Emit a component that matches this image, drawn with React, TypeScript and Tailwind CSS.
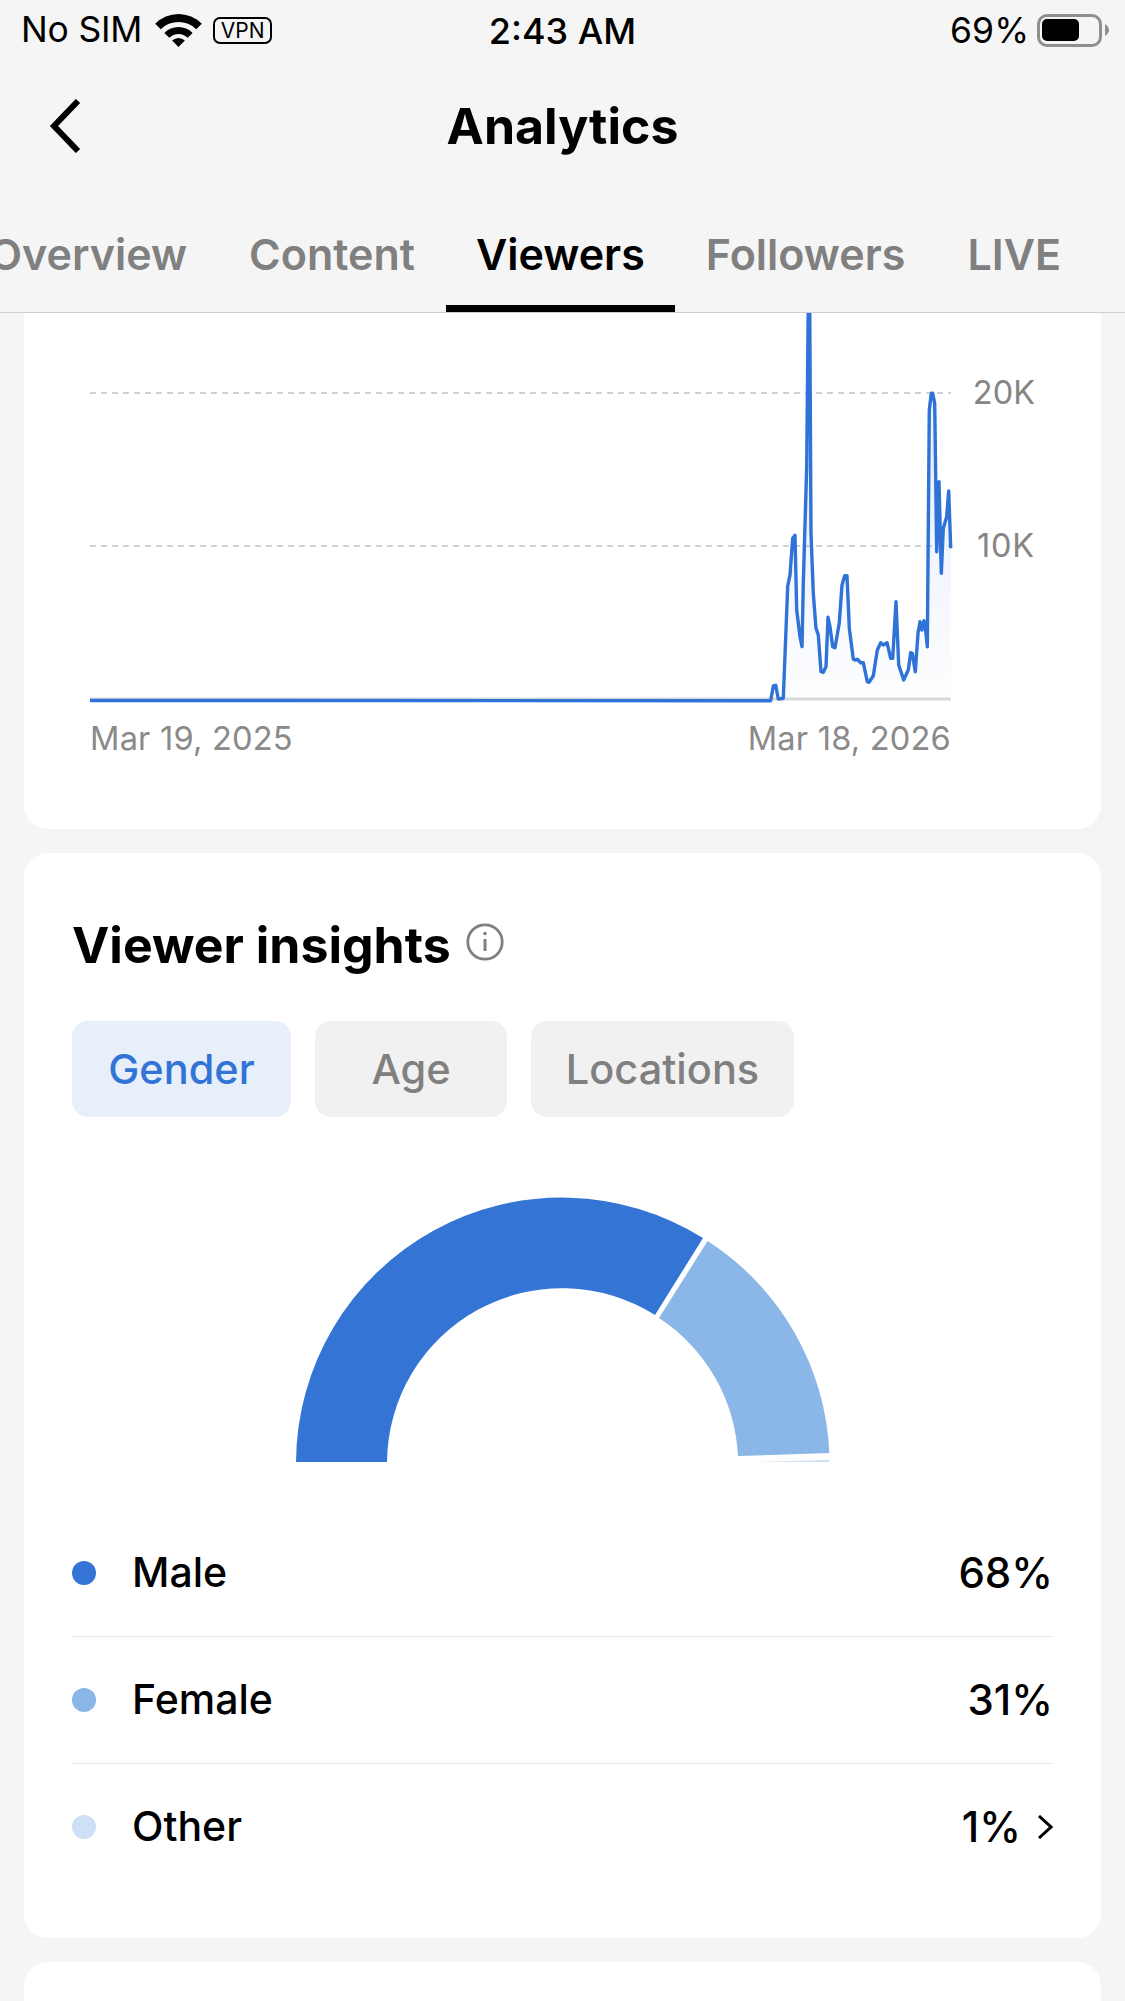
const POINTS = [
  [0,1202],[92,1202],[100,1158],[107,1156],[115,1197],[130,1195],[143,858],[150,825],[158,715],[165,706],
  [170,930],[180,1010],[186,1040],[190,850],[200,500],[205,0],[209,0],[213,700],[220,880],[228,985],
  [235,1005],[243,1115],[250,1117],[258,1100],[264,952],[270,980],[278,1040],[285,1043],[298,968],[306,855],
  [314,827],[321,827],[328,985],[340,1078],[345,1080],[352,1078],[362,1088],[370,1088],[382,1145],[387,1147],
  [400,1127],[412,1050],[422,1028],[430,1035],[441,1028],[452,1075],[458,1075],[468,905],[476,1095],[491,1140],
  [505,1110],[512,1058],[517,1060],[526,1115],[534,1000],[540,965],[546,990],[552,962],[558,1000],[562,1040],
  [568,330],[574,280],[578,280],[584,310],[590,755],[597,545],[604,820],[610,685],[620,650],[626,573],[632,745],
]

// crop coords -> page coords
const pts = POINTS.map(([x, y]) => [740 + x / 3, 300 + y / 3])
const line = "M 90,700.5 L " + pts.map(([x, y]) => `${x.toFixed(1)},${y.toFixed(1)}`).join(" L ")
const area = line + " L 951,699 L 90,699 Z"

const LEGEND = [
  { label: "Male", value: "68%", dot: "bg-[#3474d4]" },
  { label: "Female", value: "31%", dot: "bg-[#8bb6e8]" },
  { label: "Other", value: "1%", dot: "bg-[#cde0f6]", more: true },
]

function Wifi() {
  return (
    <svg viewBox="-1 0 47 33" width="47" height="33" fill="#000">
      <path d="M-0.8 9.7 A33 33 0 0 1 45.8 9.7 L40.2 15.3 A25 25 0 0 0 4.8 15.3 Z" />
      <path d="M8.4 18.9 A20 20 0 0 1 36.6 18.9 L31.7 23.8 A13 13 0 0 0 13.3 23.8 Z" />
      <path d="M16.1 26.6 A9 9 0 0 1 28.9 26.6 L22.5 33 Z" />
    </svg>
  )
}

function StatusBar() {
  return (
    <div className="grid h-[60px] grid-cols-[1fr_auto_1fr] items-center text-[35.5px] text-black">
      <div className="flex items-center pl-[21px]">
        <span className="tracking-[-0.2px]">No SIM</span>
        <span className="ml-[13px]"><Wifi /></span>
        <span className="ml-[11px] flex h-[27px] w-[59px] items-center justify-center rounded-[7px] border-[2.5px] border-black text-[21px] leading-none">VPN</span>
      </div>
      <span className="pt-[2px] text-[36px] font-medium">2:43 AM</span>
      <div className="flex items-center justify-end pr-[16px]">
        <span className="pt-[2px]">69%</span>
        <span className="ml-[8px] flex h-[33px] w-[65px] items-center rounded-[10px] border-[3px] border-[#8f8f8f] pl-[2px]">
          <span className="h-[22px] w-[37px] rounded-[5px] bg-black" />
        </span>
        <svg viewBox="0 0 4 12" width="4" height="12" className="ml-[3px]">
          <path d="M0 0 C3 2 4 4 4 6 C4 8 3 10 0 12 Z" fill="#8f8f8f" />
        </svg>
      </div>
    </div>
  )
}

function Tabs() {
  const tabs = ["Overview", "Content", "Viewers", "Followers", "LIVE"]
  return (
    <div className="flex h-[121px] overflow-hidden border-b border-[#cfcfcf]">
      <div className="-ml-[42px] flex shrink-0">
        {tabs.map((t) => (
          <div
            key={t}
            className={
              t === "Viewers"
                ? "flex h-[120px] items-center border-b-[7px] border-black px-[30px] pt-[11px] text-[43px] font-semibold text-black"
                : "flex h-[120px] items-center border-b-[7px] border-transparent px-[31px] pt-[11px] text-[43px] font-semibold text-[#808080]"
            }
          >
            {t}
          </div>
        ))}
      </div>
    </div>
  )
}

function ChartCard() {
  return (
    <div className="h-[516px] rounded-b-[24px] bg-white pl-[66px]">
      <svg viewBox="90 313 960 396" width="960" height="396" className="block">
        <defs>
          <linearGradient id="fade" x1="0" y1="0" x2="0" y2="1">
            <stop offset="0.45" stopColor="#3474d4" stopOpacity="0.1" />
            <stop offset="1" stopColor="#3474d4" stopOpacity="0.01" />
          </linearGradient>
        </defs>
        <line x1="90" x2="951" y1="393" y2="393" stroke="#c2c2c2" strokeWidth="1.5" strokeDasharray="6 5" />
        <line x1="90" x2="951" y1="546" y2="546" stroke="#c2c2c2" strokeWidth="1.5" strokeDasharray="6 5" />
        <line x1="90" x2="951" y1="699" y2="699" stroke="#d8d8d8" strokeWidth="3" />
        <path d={area} fill="url(#fade)" />
        <path d={line} fill="none" stroke="#2f72d8" strokeWidth="3.4" strokeLinejoin="round" />
        <text x="1035" y="404" textAnchor="end" fontSize="32.5" fill="#858585">20K</text>
        <text x="1035" y="557" textAnchor="end" fontSize="32.5" letterSpacing="0.8" fill="#858585">10K</text>
      </svg>
      <div className="mt-[9px] flex w-[861px] justify-between text-[32.6px] leading-[40px] tracking-[0.2px] text-[#8a8a8a]">
        <span>Mar 19, 2025</span>
        <span>Mar 18, 2026</span>
      </div>
    </div>
  )
}

function Donut() {
  return (
    <svg viewBox="290 1190 545 275" width="545" height="275" className="mx-auto mt-[73px] block">
      <path d="M296 1462 A266 266 0 0 1 703 1238 L655 1315 A175 175 0 0 0 387 1462 Z" fill="#3474d4" />
      <path d="M707.6 1241 A266 266 0 0 1 829.4 1453 L738 1456 A175 175 0 0 0 659 1318 Z" fill="#8bb6e8" />
      <path d="M755 1462 L829.4 1460 L829.4 1462 Z" fill="#cde0f6" />
    </svg>
  )
}

function InsightsCard() {
  return (
    <div className="h-[1085px] rounded-[24px] bg-white px-[48px] pt-[62px]">
      <div className="flex h-[60px] items-center">
        <h2 className="text-[50px] font-bold leading-[60px] text-black">Viewer insights</h2>
        <svg viewBox="0 0 38 38" width="38" height="38" fill="none" stroke="#808080" className="ml-[15px] -mt-[6px]">
          <circle cx="19" cy="19" r="17.2" strokeWidth="2.8" />
          <line x1="19" x2="19" y1="16" y2="28" strokeWidth="3" />
          <circle cx="19" cy="10.5" r="1.2" fill="#808080" strokeWidth="1.2" />
        </svg>
      </div>
      <div className="mt-[46px] flex gap-[24px] text-[41.5px] font-medium">
        <div className="flex h-[96px] w-[219px] items-center justify-center rounded-[16px] bg-[#e7effa] text-[#3274d6]">Gender</div>
        <div className="flex h-[96px] w-[192px] items-center justify-center rounded-[16px] bg-[#f1f1f1] text-[#808080]">Age</div>
        <div className="flex h-[96px] w-[263px] items-center justify-center rounded-[16px] bg-[#f1f1f1] text-[#808080]">Locations</div>
      </div>
      <Donut />
      <div className="mt-[45px]">
        {LEGEND.map((row, i) => (
          <div
            key={row.label}
            className={
              i < 2
                ? "flex h-[127px] items-center border-b border-[#e6e6e6] text-[42px] font-medium text-black"
                : "flex h-[126px] items-center text-[42px] font-medium text-black"
            }
          >
            <span className={`h-[24px] w-[24px] rounded-full ${row.dot}`} />
            <span className="ml-[36px] flex-1 text-[41px]">{row.label}</span>
            <span className="pb-[2px]">{row.value}</span>
            {row.more && (
              <svg viewBox="0 0 16 24" width="16" height="24" fill="none" stroke="#000" strokeWidth="3" className="ml-[16px]">
                <path d="M2 1 L14 12 L2 23" />
              </svg>
            )}
          </div>
        ))}
      </div>
    </div>
  )
}

export default function App() {
  return (
    <div className="h-[2001px] overflow-hidden bg-[#f5f5f5] font-['Inter',sans-serif]">
      <StatusBar />
      <div className="grid h-[132px] grid-cols-[1fr_auto_1fr] items-center">
        <svg viewBox="0 0 32 54" width="32" height="54" fill="none" stroke="#000" strokeWidth="6" className="ml-[49px]">
          <path d="M29 2 L5 27 L29 52" />
        </svg>
        <h1 className="text-[50px] font-bold text-black">Analytics</h1>
      </div>
      <Tabs />
      <div className="flex flex-col gap-[24px] px-[24px]">
        <ChartCard />
        <InsightsCard />
        <div className="h-[60px] rounded-t-[24px] bg-white" />
      </div>
    </div>
  )
}
